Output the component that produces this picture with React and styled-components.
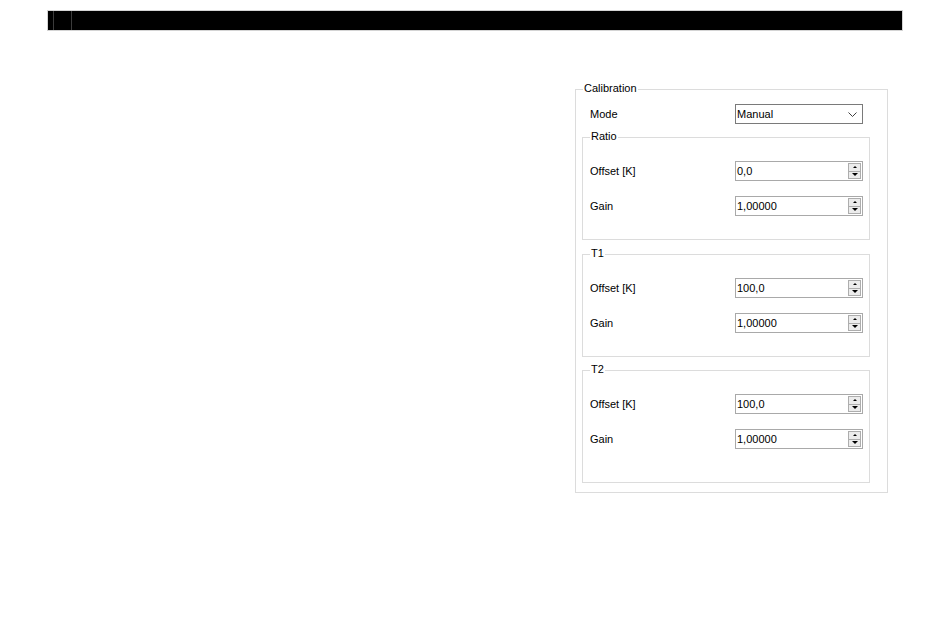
import React from 'react';
import styled, { createGlobalStyle } from 'styled-components';

const GlobalStyle = createGlobalStyle`
  html, body {
    margin: 0;
    padding: 0;
    background: #ffffff;
  }
  body {
    font-family: "Liberation Sans", Arial, sans-serif;
    font-size: 11px;
    color: #000000;
  }
`;

const Page = styled.div`
  width: 950px;
  height: 638px;
  box-sizing: border-box;
  padding: 10px 47px 0 47px;
  background: #ffffff;
`;

// black strip along the top with two thin dividers
const Toolbar = styled.div`
  height: 21px;
  box-sizing: border-box;
  border: 1px solid #d4d4d4;
  background: #000000;
  display: flex;
`;

const ToolbarCell = styled.div`
  width: ${(p) => p.$w}px;
  border-right: 1px solid #3c3c3c;
  flex: none;
`;

const Content = styled.div`
  display: flex;
  justify-content: flex-end;
  padding-right: 15px;
  margin-top: 58px;
`;

const GroupBox = styled.div`
  position: relative;
  box-sizing: border-box;
  border: 1px solid #dcdcdc;
  width: ${(p) => p.$width}px;
  height: ${(p) => p.$height}px;
  margin: ${(p) => p.$margin || '0'};
  padding: ${(p) => p.$padding || '0'};
  display: flex;
  flex-direction: column;
`;

const GroupTitle = styled.span`
  position: absolute;
  top: -8px;
  left: 7px;
  padding: 0 1px;
  background: #ffffff;
  line-height: 13px;
  white-space: nowrap;
`;

const Row = styled.div`
  display: grid;
  grid-template-columns: ${(p) => p.$labelWidth}px 128px;
  align-items: center;
  height: 20px;
  padding-left: ${(p) => p.$indent}px;
  margin-top: ${(p) => p.$top || 0}px;
`;

const Label = styled.span`
  line-height: 13px;
  white-space: nowrap;
`;

const Combo = styled.div`
  height: 20px;
  box-sizing: border-box;
  border: 1px solid #7a7a7a;
  background: #ffffff;
  display: flex;
  align-items: center;
  justify-content: space-between;
  padding: 0 5px 0 1px;
`;

const SpinBox = styled.div`
  height: 20px;
  box-sizing: border-box;
  border: 1px solid #a9a9a9;
  background: #ffffff;
  display: flex;
  align-items: stretch;
  padding: 1px;
`;

const SpinText = styled.span`
  flex: 1;
  line-height: 16px;
`;

const SpinButtons = styled.div`
  width: 13px;
  display: flex;
  flex-direction: column;
`;

const SpinButton = styled.div`
  flex: 1;
  box-sizing: border-box;
  background: #ececec;
  border: 1px solid #adadad;
  border-top-width: ${(p) => (p.$down ? 0 : 1)}px;
  display: flex;
  align-items: center;
  justify-content: center;
`;

const Arrow = styled.div`
  width: 0;
  height: 0;
  border-left: ${(p) => (p.$down ? 3 : 2)}px solid transparent;
  border-right: ${(p) => (p.$down ? 3 : 2)}px solid transparent;
  ${(p) =>
    p.$down
      ? 'border-top: 3px solid #000000;'
      : 'border-bottom: 2px solid #000000;'}
`;

const Chevron = () => (
  <svg width="9" height="5" viewBox="0 0 9 5">
    <polyline points="0.5,0.5 4.5,4.5 8.5,0.5" fill="none" stroke="#404040" strokeWidth="1" />
  </svg>
);

const Spin = ({ value }) => (
  <SpinBox>
    <SpinText>{value}</SpinText>
    <SpinButtons>
      <SpinButton>
        <Arrow />
      </SpinButton>
      <SpinButton $down>
        <Arrow $down />
      </SpinButton>
    </SpinButtons>
  </SpinBox>
);

const groups = [
  { title: 'Ratio', offset: '0,0', gain: '1,00000', height: 103, top: 13 },
  { title: 'T1', offset: '100,0', gain: '1,00000', height: 103, top: 14 },
  { title: 'T2', offset: '100,0', gain: '1,00000', height: 113, top: 13 },
];

export default function App() {
  return (
    <>
      <GlobalStyle />
      <Page>
        <Toolbar>
          <ToolbarCell $w={5} />
          <ToolbarCell $w={17} />
        </Toolbar>
        <Content>
          <GroupBox $width={313} $height={404} $padding="14px 0 0 0">
            <GroupTitle>Calibration</GroupTitle>
            <Row $labelWidth={145} $indent={14}>
              <Label>Mode</Label>
              <Combo>
                <span>Manual</span>
                <Chevron />
              </Combo>
            </Row>
            {groups.map((g) => (
              <GroupBox
                key={g.title}
                $width={288}
                $height={g.height}
                $margin={`${g.top}px 0 0 6px`}
                $padding="23px 0 0 0"
              >
                <GroupTitle>{g.title}</GroupTitle>
                <Row $labelWidth={145} $indent={7}>
                  <Label>Offset [K]</Label>
                  <Spin value={g.offset} />
                </Row>
                <Row $labelWidth={145} $indent={7} $top={15}>
                  <Label>Gain</Label>
                  <Spin value={g.gain} />
                </Row>
              </GroupBox>
            ))}
          </GroupBox>
        </Content>
      </Page>
    </>
  );
}
